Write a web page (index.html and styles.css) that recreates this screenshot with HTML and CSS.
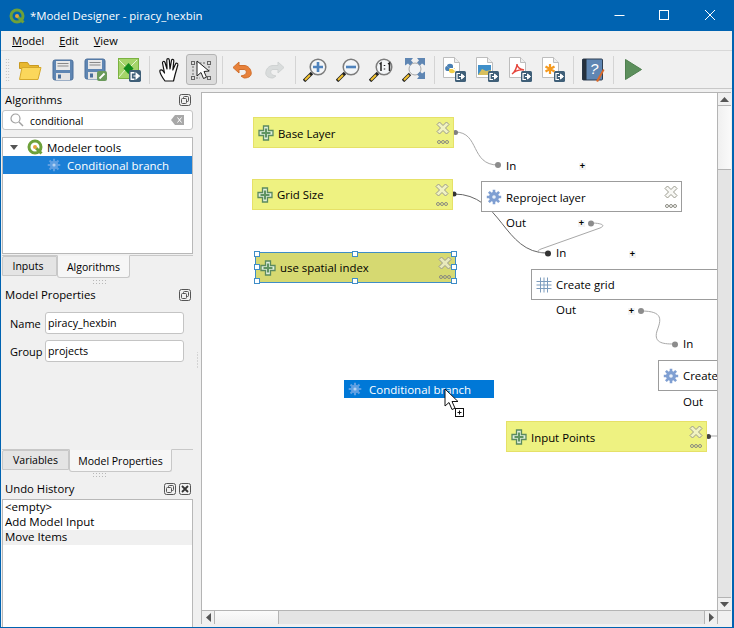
FILE: index.html
```html
<!DOCTYPE html>
<html lang="en">
<head>
<meta charset="utf-8">
<title>*Model Designer - piracy_hexbin</title>
<link rel="stylesheet" href="styles.css">
</head>
<body>
<svg class="defs" width="0" height="0" aria-hidden="true">
  <defs>
    <symbol id="plus" viewBox="0 0 16 16">
      <path d="M5.500 1h5v4.500H15v5h-4.500V15h-5v-4.500H1v-5h4.500z" fill="#dfeedd" stroke="#5b8a5e" stroke-width="1.300"/>
      <path d="M8 3.500v9M3.500 8h9" stroke="#5f9462" stroke-width="2.200"/>
    </symbol>
    <symbol id="gear" viewBox="0 0 16 16">
      <g stroke="#7f9fd2" stroke-width="2.600">
        <path d="M8 .8v14.400M.8 8h14.400M2.900 2.900l10.200 10.200M13.100 2.900L2.900 13.100"/>
      </g>
      <circle cx="8" cy="8" r="5" fill="#7f9fd2"/>
      <circle cx="8" cy="8" r="1.800" fill="#e8f0fa"/>
    </symbol>
    <symbol id="gear-sel" viewBox="0 0 16 16">
      <g stroke="#5f9fe2" stroke-width="2.400">
        <path d="M8 .8v14.400M.8 8h14.400M2.900 2.900l10.200 10.200M13.100 2.900L2.900 13.100"/>
      </g>
      <circle cx="8" cy="8" r="4.800" fill="#5f9fe2"/>
      <circle cx="8" cy="8" r="1.800" fill="#b4d2f2"/>
    </symbol>
    <symbol id="closex" viewBox="0 0 14 14">
      <path d="M3.500 1L7 4.500 10.500 1 13 3.500 9.500 7 13 10.500 10.500 13 7 9.500 3.500 13 1 10.500 4.500 7 1 3.500z" fill="#f4f4ee" fill-opacity=".6" stroke="#9a9a8e" stroke-width="1"/>
    </symbol>
    <symbol id="dots" viewBox="0 0 12 4">
      <g fill="none" stroke="#8a8a80" stroke-width="1"><circle cx="2" cy="2" r="1.500"/><circle cx="6" cy="2" r="1.500"/><circle cx="10" cy="2" r="1.500"/></g>
    </symbol>
    <symbol id="dock" viewBox="0 0 12 12">
      <rect x=".5" y=".5" width="11" height="11" rx="2" fill="#f0f0f0" stroke="#555"/>
      <rect x="4.500" y="2.500" width="5" height="5" rx="1" fill="none" stroke="#555"/>
      <rect x="2.500" y="4.500" width="5" height="5" rx="1" fill="#f0f0f0" stroke="#555"/>
    </symbol>
    <symbol id="export" viewBox="0 0 11 11">
      <rect width="11" height="11" rx="1.500" fill="#3f5f78"/>
      <path d="M5 2.500H2v6h3" fill="none" stroke="#fff" stroke-width="1.200"/>
      <path d="M4 5.500h3.500M6.500 3v5L9.500 5.500z" fill="#fff" stroke="#fff"/>
    </symbol>
    <symbol id="page" viewBox="0 0 17 21">
      <path d="M.5.500h11l5 5v15H.5z" fill="#fff" stroke="#bdbdbd"/>
      <path d="M11.500.500v5h5" fill="#eee" stroke="#bdbdbd"/>
    </symbol>
    <symbol id="lens" viewBox="0 0 24 24">
      <path d="M1 23l8-8" stroke="#222" stroke-width="3.400"/>
      <path d="M2 22l5-5" stroke="#f2c230" stroke-width="2"/>
      <circle cx="15" cy="9" r="7.800" fill="#f3f5f7" stroke="#7c7c7c" stroke-width="1.500"/>
    </symbol>
    <symbol id="qgis" viewBox="0 0 16 16">
      <circle cx="8" cy="8" r="6" fill="none" stroke="#6ea13a" stroke-width="3"/>
      <path d="M9 9l5.500 5.500" stroke="#6ea13a" stroke-width="3"/>
      <circle cx="8" cy="8" r="2" fill="#e8a33a"/>
    </symbol>
  </defs>
</svg>

<div class="window">
  <header class="titlebar">
    <svg class="app-logo" width="16" height="16"><use href="#qgis"/></svg>
    <span class="title-text">*Model Designer - piracy_hexbin</span>
    <div class="win-controls">
      <svg width="45" height="31"><path d="M16.500 15.500h10" stroke="#fff"/></svg>
      <svg width="45" height="31"><rect x="16.500" y="10.500" width="9" height="9" fill="none" stroke="#fff"/></svg>
      <svg width="45" height="31"><path d="M17 10l10 10M27 10L17 20" stroke="#fff"/></svg>
    </div>
  </header>

  <nav class="menubar">
    <span class="menu-item"><u>M</u>odel</span>
    <span class="menu-item"><u>E</u>dit</span>
    <span class="menu-item"><u>V</u>iew</span>
  </nav>

  <div class="toolbar">
    <div class="grip"></div>
    <div class="tool"><svg width="24" height="22" viewBox="0 0 24 22"><path d="M1.500 3.500h8l2 3h9v3H1.500z" fill="#e8b830" stroke="#c99a20"/><path d="M1.500 20.500l2.500-12h19l-3 12z" fill="#fbd75b" stroke="#d6a92c"/></svg></div>
    <div class="tool"><svg width="22" height="22" viewBox="0 0 22 22"><rect x="1" y="1" width="20" height="20" rx="2" fill="#5f86b3" stroke="#4a6f9b"/><rect x="4" y="2" width="14" height="9" fill="#e8e8e8"/><path d="M5.500 4.500h11M5.500 7h11" stroke="#888"/><rect x="4" y="14" width="14" height="7" fill="#e4e4e4"/><rect x="6" y="15.500" width="3" height="4" fill="#4a6f9b"/></svg></div>
    <div class="tool"><svg width="24" height="23" viewBox="0 0 24 23"><rect x="1" y="1" width="20" height="20" rx="2" fill="#5f86b3" stroke="#4a6f9b"/><rect x="4" y="2" width="14" height="9" fill="#e8e8e8"/><path d="M5.500 4.500h11M5.500 7h11" stroke="#888"/><rect x="4" y="14" width="10" height="7" fill="#e4e4e4"/><rect x="6" y="15.500" width="3" height="4" fill="#4a6f9b"/><rect x="13" y="13" width="10" height="10" rx="2" fill="#6a9a5b"/><path d="M15.500 20.500l5-5" stroke="#fff" stroke-width="1.800"/></svg></div>
    <div class="tool tool-export"><svg width="23" height="24" viewBox="0 0 23 24"><rect x=".5" y=".5" width="20" height="20" fill="#a5d46a" stroke="#7bb241"/><path d="M1 2l9 9 9-9M1 19l6-7M19 19l-6-7" fill="none" stroke="#e8f5d0"/><path d="M10.500 5l5 5.500-5 5.500-5-5.500z" fill="#128a1c"/><use href="#export" x="11" y="12" width="12" height="12"/></svg></div>
    <div class="sep"></div>
    <div class="tool"><svg width="20" height="25" viewBox="0 0 20 25"><path d="M6 24C3 20 1 17 .8 14c0-1.500 2.200-1.500 3.200 0l1.500 2-2-10c-.3-1.700 2-2.200 2.500-.5l2 6.500-.2-9c0-1.800 2.400-1.800 2.500 0l.7 9 1.500-8.500c.3-1.700 2.500-1.300 2.300.5l-1 9 2.700-6c.7-1.500 2.700-.7 2.300 1l-2.800 10c-.5 2-1 4-1.500 6z" fill="#fff" stroke="#111" stroke-width="1.200" stroke-linejoin="round"/></svg></div>
    <div class="tool tool-active"><svg width="22" height="24" viewBox="0 0 22 24"><g fill="none" stroke="#666"><rect x="1.500" y="3.500" width="3" height="3"/><rect x="1.500" y="18.500" width="3" height="3"/><rect x="17.500" y="3.500" width="3" height="3"/><rect x="17.500" y="18.500" width="3" height="3"/><path d="M6 5h10M6 20h4M3 8v9M19 8v6" stroke-dasharray="2 1.500"/></g><path d="M7 3v15l4-3.500 2.500 6 3-1.300-2.500-5.700 5-.5z" fill="#fff" stroke="#222"/></svg></div>
    <div class="sep"></div>
    <div class="tool"><svg width="20" height="18" viewBox="0 0 20 18"><path d="M7 1L1 6.500 7 12V8.500h5c3 0 3.500 5-1 6l-2 .5 3 2c5.500 0 8-2.500 7-6.500S15 4.500 12 4.500H7z" fill="#e8813a" stroke="#d06f2c" stroke-linejoin="round"/></svg></div>
    <div class="tool"><svg width="20" height="18" viewBox="0 0 20 18"><path d="M13 1l6 5.500L13 12V8.500H8c-3 0-3.500 5 1 6l2 .5-3 2c-5.500 0-8-2.500-7-6.500S5 4.500 8 4.500h5z" fill="#d9dcdc" stroke="#cfd2d2" stroke-linejoin="round"/></svg></div>
    <div class="sep"></div>
    <div class="tool"><svg width="24" height="24"><use href="#lens"/><path d="M15 4v10M10 9h10" stroke="#4f83bd" stroke-width="2.600"/></svg></div>
    <div class="tool"><svg width="24" height="24"><use href="#lens"/><path d="M10 9h10" stroke="#4f83bd" stroke-width="2.600"/></svg></div>
    <div class="tool"><svg width="24" height="24"><use href="#lens"/><path d="M10.500 6l1.500-1v8M19 6l1.500-1v8M15.500 7v1M15.500 10.500v1" fill="none" stroke="#222" stroke-width="1.500"/></svg></div>
    <div class="tool"><svg width="24" height="24" viewBox="0 0 24 24"><path d="M1 23l7-7" stroke="#222" stroke-width="3.400"/><path d="M2 22l5-5" stroke="#f2c230" stroke-width="2"/><circle cx="13" cy="11" r="6" fill="#f0f2f4" stroke="#a8a8a8"/><path d="M3 0h8L9 2.500l2 2L8 7.500l-2-2-3 2zM23 0h-8l2 2.500-2 2 3 3 2-2 3 2zM23 21h-8l2-2.500-2-2 3-3 2 2 3-2z" fill="#5f86b3"/></svg></div>
    <div class="sep"></div>
    <div class="tool tool-doc"><svg width="23" height="25" viewBox="0 0 23 25"><use href="#page" width="17" height="21"/><path d="M4 9c0-3 6-3 6 0v2H6.500" fill="#4a80b3"/><path d="M4 9c-2.500 0-2.500 5 0 5h2.500v-3" fill="#4a80b3"/><path d="M12 14c0 3-6 3-6 0v-2h3.500" fill="#f3cf46"/><path d="M10 11c2.500 0 2.500 3 2 3v-3z" fill="#f3cf46"/><use href="#export" x="12" y="14" width="11" height="11"/></svg></div>
    <div class="tool tool-doc"><svg width="23" height="25" viewBox="0 0 23 25"><use href="#page" width="17" height="21"/><rect x="2" y="8" width="13" height="10" fill="#3f8fc9"/><path d="M2 18l4-6 4 2 5-1v5z" fill="#d8bf5c"/><use href="#export" x="12" y="14" width="11" height="11"/></svg></div>
    <div class="tool tool-doc"><svg width="23" height="25" viewBox="0 0 23 25"><use href="#page" width="17" height="21"/><path d="M3 17c3-2 5-7 5-10 0 3 2 5 7 6-4-.5-9 1-12 4z" fill="none" stroke="#e5453c" stroke-width="1.400"/><use href="#export" x="12" y="14" width="11" height="11"/></svg></div>
    <div class="tool tool-doc"><svg width="23" height="25" viewBox="0 0 23 25"><use href="#page" width="17" height="21"/><path d="M8 7v10M3.500 9.500l9 5M12.500 9.500l-9 5" stroke="#f59a1f" stroke-width="2.200"/><use href="#export" x="12" y="14" width="11" height="11"/></svg></div>
    <div class="sep"></div>
    <div class="tool"><svg width="23" height="24" viewBox="0 0 23 24"><rect x=".5" y="1" width="20" height="21" rx="1" fill="#5f86b3" stroke="#2e3e52"/><rect x=".5" y="1" width="4" height="21" fill="#25303d"/><text class="help-mark" x="8" y="16">?</text><path d="M14 23l7-12 1.500 1-6.500 12z" fill="#d9692b"/></svg></div>
    <div class="sep"></div>
    <div class="tool"><svg width="17" height="21" viewBox="0 0 17 21"><path d="M.5.500v20L16.500 10.500z" fill="#5c8f5c" stroke="#4f7f4f"/></svg></div>
  </div>

  <div class="main">
    <aside class="sidebar">
      <section class="panel-algorithms">
        <div class="dock-title"><span>Algorithms</span><svg width="12" height="12"><use href="#dock"/></svg></div>
        <div class="search">
          <svg width="14" height="14" viewBox="0 0 14 14"><circle cx="5.500" cy="5.500" r="4.500" fill="none" stroke="#a0a0a0" stroke-width="1.200"/><path d="M9 9l4 4" stroke="#a0a0a0" stroke-width="1.500"/></svg>
          <span class="search-text">conditional</span>
          <svg width="13" height="10" viewBox="0 0 13 10"><path d="M4 0h9v10H4L0 5z" fill="#a8a8a8"/><path d="M6.500 2.500l4 5M10.500 2.500l-4 5" stroke="#fff"/></svg>
        </div>
        <div class="tree">
          <div class="tree-row">
            <svg class="caret" width="8" height="5"><path d="M0 0h8L4 5z" fill="#555"/></svg>
            <svg width="16" height="16"><use href="#qgis"/></svg>
            <span>Modeler tools</span>
          </div>
          <div class="tree-row tree-selected">
            <svg class="tree-gear" width="14" height="14"><use href="#gear-sel"/></svg>
            <span>Conditional branch</span>
          </div>
        </div>
      </section>
      <div class="tabs tabs-a">
        <span class="tab tab-off tab-inputs">Inputs</span>
        <span class="tab tab-on tab-alg">Algorithms</span>
      </div>
      <div class="drag-dots"></div>
      <section class="panel-props">
        <div class="dock-title"><span>Model Properties</span><svg width="12" height="12"><use href="#dock"/></svg></div>
        <div class="form-row"><label>Name</label><span class="field">piracy_hexbin</span></div>
        <div class="form-row"><label>Group</label><span class="field">projects</span></div>
      </section>
      <div class="tabs tabs-b">
        <span class="tab tab-off tab-vars">Variables</span>
        <span class="tab tab-on tab-mp">Model Properties</span>
      </div>
      <div class="drag-dots drag-dots-b"></div>
      <section class="panel-undo">
        <div class="dock-title"><span>Undo History</span><span class="dock-btns"><svg width="12" height="12"><use href="#dock"/></svg><svg width="12" height="12" viewBox="0 0 12 12"><rect x=".5" y=".5" width="11" height="11" rx="2" fill="#f0f0f0" stroke="#555"/><path d="M3 3l6 6M9 3L3 9" stroke="#333" stroke-width="1.800"/></svg></span></div>
        <ul class="undo-list">
          <li>&lt;empty&gt;</li>
          <li>Add Model Input</li>
          <li class="undo-current">Move Items</li>
        </ul>
      </section>
    </aside>

    <div class="vsplit"></div>

    <div class="view">
      <div class="canvas">
        <svg class="wires" width="515" height="517">
          <g fill="none" transform="translate(-202 -93)">
            <path d="M455 132C480 132 470 165 498 165" stroke="#a8a8a8"/>
            <path d="M454 194C502 194 503 253 547 253" stroke="#666"/>
            <path d="M591 223C600 223 607 225 600 228L541 249C534 252 540 253 547 253" stroke="#a8a8a8"/>
            <path d="M641 311C664 311 661 320 657 331C653 344 665 344 675 344" stroke="#a8a8a8"/>
            <path d="M708 436H717" stroke="#a8a8a8"/>
          </g>
          <g transform="translate(-202 -93)">
            <circle cx="455.500" cy="132.500" r="2.500" fill="#808080"/>
            <circle cx="498" cy="165" r="3" fill="#8c8c8c"/>
            <circle cx="454" cy="194" r="2.500" fill="#333"/>
            <circle cx="591" cy="223.500" r="3" fill="#8c8c8c"/>
            <circle cx="548" cy="253.500" r="3" fill="#333"/>
            <circle cx="641" cy="311" r="3" fill="#8c8c8c"/>
            <circle cx="675" cy="344.500" r="3" fill="#8c8c8c"/>
            <circle cx="708.500" cy="436.500" r="2.500" fill="#444"/>
          </g>
        </svg>

        <div class="node input n-base">
          <svg class="node-icon" width="16" height="16"><use href="#plus"/></svg>
          <span>Base Layer</span>
          <svg class="node-x" width="14" height="14"><use href="#closex"/></svg>
          <svg class="node-dots" width="12" height="4"><use href="#dots"/></svg>
        </div>
        <div class="node input n-grid">
          <svg class="node-icon" width="16" height="16"><use href="#plus"/></svg>
          <span>Grid Size</span>
          <svg class="node-x" width="14" height="14"><use href="#closex"/></svg>
          <svg class="node-dots" width="12" height="4"><use href="#dots"/></svg>
        </div>
        <div class="node input selected n-index">
          <svg class="node-icon" width="16" height="16"><use href="#plus"/></svg>
          <span>use spatial index</span>
          <svg class="node-x" width="14" height="14"><use href="#closex"/></svg>
          <svg class="node-dots" width="12" height="4"><use href="#dots"/></svg>
          <i class="handle h-tl"></i><i class="handle h-tc"></i><i class="handle h-tr"></i>
          <i class="handle h-ml"></i><i class="handle h-mr"></i>
          <i class="handle h-bl"></i><i class="handle h-bc"></i><i class="handle h-br"></i>
        </div>
        <div class="node algo n-reproject">
          <svg class="node-icon" width="16" height="16"><use href="#gear"/></svg>
          <span>Reproject layer</span>
          <svg class="node-x" width="14" height="14"><use href="#closex"/></svg>
          <svg class="node-dots" width="12" height="4"><use href="#dots"/></svg>
        </div>
        <div class="node algo n-create">
          <svg class="node-icon" width="16" height="16" viewBox="0 0 16 16"><path d="M.5 4.500h15M.5 8h15M.5 11.500h15M4.500.5v15M8 .5v15M11.500.5v15" stroke="#7d9cbd" fill="none"/></svg>
          <span>Create grid</span>
        </div>
        <div class="node algo n-create2">
          <svg class="node-icon" width="16" height="16"><use href="#gear"/></svg>
          <span>Create</span>
        </div>
        <div class="node input n-points">
          <svg class="node-icon" width="16" height="16"><use href="#plus"/></svg>
          <span>Input Points</span>
          <svg class="node-x" width="14" height="14"><use href="#closex"/></svg>
          <svg class="node-dots" width="12" height="4"><use href="#dots"/></svg>
        </div>

        <span class="port p-in1">In</span>
        <span class="port p-out1">Out</span>
        <span class="port p-in2">In</span>
        <span class="port p-out2">Out</span>
        <span class="port p-in3">In</span>
        <span class="port p-out3">Out</span>
        <span class="mini-plus m1">+</span>
        <span class="mini-plus m2">+</span>
        <span class="mini-plus m3">+</span>
        <span class="mini-plus m4">+</span>

        <div class="drag-item">
          <svg width="14" height="14"><use href="#gear-sel"/></svg>
          <span>Conditional branch</span>
        </div>
        <svg class="cursor" width="24" height="34" viewBox="0 0 24 34">
          <path d="M1 1v17l4-3.500 3 7 3-1.300-3-6.700h6z" fill="#fff" stroke="#111"/>
          <rect x="11.500" y="20.500" width="8" height="8" fill="#fff" stroke="#111"/>
          <path d="M13.500 24.500h4M15.500 22.500v4" stroke="#111"/>
        </svg>
      </div>
      <div class="vbar">
        <div class="sb-btn sb-v"><svg width="9" height="5"><path d="M0 5h9L4.500 0z" fill="#555"/></svg></div>
        <div class="vthumb"></div>
        <div class="vtrack"></div>
        <div class="sb-btn sb-v sb-down"><svg width="9" height="5"><path d="M0 0h9L4.500 5z" fill="#555"/></svg></div>
      </div>
      <div class="hbar">
        <div class="sb-btn sb-h"><svg width="5" height="9"><path d="M5 0v9L0 4.500z" fill="#555"/></svg></div>
        <div class="hthumb"></div>
        <div class="htrack"></div>
        <div class="sb-btn sb-h sb-right"><svg width="5" height="9"><path d="M0 0v9l5-4.500z" fill="#555"/></svg></div>
      </div>
      <div class="corner"></div>
    </div>
  </div>
</div>
</body>
</html>
```

FILE: styles.css
```css
* { box-sizing: border-box; }
html, body { margin: 0; padding: 0; overflow: hidden; }
body { width: 734px; height: 628px; font-family: "Open Sans", "Noto Sans", sans-serif; font-size: 11px; color: #000; background: #f0f0f0; }
svg { display: block; flex: none; }
.defs { position: absolute; }

.window { width: 734px; height: 628px; display: flex; flex-direction: column; background: #f0f0f0; border-left: 1px solid #0063b1; border-right: 2px solid #0063b1; border-bottom: 1px solid #0063b1; }

.titlebar { height: 31px; flex: none; margin-left: -1px; margin-right: -2px; background: #0063b1; color: #fff; display: flex; align-items: center; padding-left: 9px; font-size: 11.400px; }
.title-text { margin-left: 5px; }
.win-controls { margin-left: auto; display: flex; padding-right: 1px; }

.menubar { height: 20px; flex: none; display: flex; align-items: center; padding-left: 11px; gap: 15px; border-bottom: 1px solid #d8d8d8; }

.toolbar { height: 38px; flex: none; display: flex; align-items: center; border-bottom: 1px solid #c8c8c8; padding-left: 3px; }
.grip { width: 5px; height: 24px; margin-right: 3.500px; margin-left: 1px; background-image: radial-gradient(circle, #b8b8b8 0.600px, transparent 0.700px); background-size: 2.500px 3px; }
.tool { width: 33px; height: 31px; display: flex; align-items: center; justify-content: center; }
.tool-active { width: 31px; margin: 0 2px 0 0; background: #dcdcdc; border: 1px solid #b4b4b4; border-radius: 3px; }
.sep { width: 7px; height: 28px; flex: none; background: linear-gradient(#d4d4d4, #d4d4d4) no-repeat center / 1px 100%; }
.help-mark { font-size: 15px; fill: #fff; font-family: "Liberation Sans", sans-serif; font-style: italic; }

.main { flex: 1; min-height: 0; display: flex; }

.sidebar { width: 192px; flex: none; padding-left: 1px; display: flex; flex-direction: column; }
.dock-title { height: 21px; display: flex; align-items: center; justify-content: space-between; padding: 0 2px 0 3px; font-size: 11.300px; }
.dock-btns { display: flex; gap: 3px; }

.search { height: 20px; background: #fff; border: 1px solid #c4c4c4; border-radius: 3px; display: flex; align-items: center; padding: 0 8px 0 7px; gap: 6px; }
.search-text { flex: 1; font-size: 10.300px; padding-top: 1px; }

.tree { height: 117px; margin-top: 7px; background: #fff; border: 1px solid #b8b8b8; }
.tree-row { height: 18px; display: flex; align-items: center; font-size: 11.500px; }
.tree-row .caret { margin: 0 9px 0 7px; }
.tree-row span { margin-left: 4px; white-space: nowrap; }
.tree-selected { background: #1b7fd6; color: #fff; }
.tree-gear { margin-left: 44px; }
.tree-selected span { margin-left: 6px; }

.tabs { display: flex; align-items: flex-start; flex: none; position: relative; }
.tabs-a { height: 24px; margin-top: 1px; background: linear-gradient(#c8c8c8, #c8c8c8) no-repeat top / 100% 1px; }
.tabs-b { height: 24px; margin-top: 0; background: linear-gradient(#c8c8c8, #c8c8c8) no-repeat top / 100% 1px; }
.tab { display: flex; align-items: center; justify-content: center; white-space: nowrap; font-size: 10.500px; }
.tab-off { height: 20px; margin-top: 1px; background: #e4e4e4; border: 1px solid #c8c8c8; border-top-left-radius: 2px; }
.tab-on { height: 23px; background: #f6f6f6; border: 1px solid #c8c8c8; border-top-color: #f0f0f0; border-radius: 0 0 3px 3px; }
.tab-inputs { width: 55px; padding-right: 3px; }
.tab-alg { width: 73px; }
.tab-vars { width: 67px; }
.tab-mp { width: 103px; }

.drag-dots { height: 5px; width: 16px; margin: 0 0 0 90px; flex: none; background-image: radial-gradient(circle, #b8b8b8 0.600px, transparent 0.700px); background-size: 3px 3px; }
.panel-props { height: 165px; flex: none; }
.panel-props .dock-title { margin-bottom: 7px; }
.form-row { display: flex; align-items: center; height: 22px; margin-bottom: 6px; padding-left: 8px; }
.form-row label { width: 35px; }
.field { width: 139px; height: 22px; display: flex; align-items: center; background: #fff; border: 1px solid #c4c4c4; border-radius: 3px; padding-left: 2px; font-size: 10.700px; }
.drag-dots-b { margin-top: -1px; }
.panel-undo { flex: 1; min-height: 0; display: flex; flex-direction: column; padding-top: 1px; }
.undo-list { list-style: none; margin: 0; padding: 0; flex: 1; background: #fff; border: 1px solid #b8b8b8; border-bottom: 0; font-size: 11.500px; }
.undo-list li { height: 15px; line-height: 14px; padding-left: 2px; }
.undo-current { background: #f0f0f0; }

.vsplit { width: 8px; flex: none; background-image: radial-gradient(circle, #b8b8b8 0.600px, transparent 0.700px); background-position: center; background-repeat: repeat-y; background-size: 3px 3px; mask: linear-gradient(transparent 263px, #000 263px, #000 280px, transparent 280px); }

.view { width: 530px; height: 532px; margin-top: 3px; flex: none; display: grid; grid-template-columns: 515px 14px; grid-template-rows: 517px 14px; border: 1px solid #b4b4b4; background: #fff; }

.canvas { position: relative; overflow: hidden; background: #fff; font-size: 11.500px; }
.wires { position: absolute; left: 0; top: 0; }

.node { position: absolute; width: 201px; height: 31px; display: flex; align-items: center; padding-left: 4px; border: 1px solid; white-space: nowrap; font-size: 11.400px; }
.node > span { margin-left: 4px; }
.input { background: #eef281; border-color: #e6e168; }
.algo { background: #fff; border-color: #9c9c9c; }
.selected { background: #d6d971; border-color: #3f8dc7; }
.node-icon { flex: none; }
.node-x { position: absolute; right: 3px; top: 3px; }
.node-dots { position: absolute; right: 4px; bottom: 3px; }

.n-base { left: 51px; top: 24px; padding-top: 1px; }
.n-grid { left: 50px; top: 86px; }
.n-index { left: 53px; top: 159px; height: 31px; width: 201px; }
.n-reproject { left: 279px; top: 88px; width: 201px; padding-top: 1px; }
.n-create { left: 329px; top: 176px; width: 220px; }
.n-create2 { left: 456px; top: 267px; width: 100px; }
.n-points { left: 304px; top: 328px; padding-top: 1px; }

.handle { position: absolute; width: 6px; height: 6px; background: #fff; border: 1px solid #3f8dc7; }
.h-tl { left: -2px; top: -2px; }
.h-tc { left: 96px; top: -2px; }
.h-tr { right: -2px; top: -2px; }
.h-ml { left: -2px; top: 11px; }
.h-mr { right: -2px; top: 11px; }
.h-bl { left: -2px; bottom: -2px; }
.h-bc { left: 96px; bottom: -2px; }
.h-br { right: -2px; bottom: -2px; }

.port { position: absolute; line-height: 16px; font-size: 11.500px; }
.p-in1 { left: 304px; top: 65px; }
.p-out1 { left: 304px; top: 122px; }
.p-in2 { left: 354px; top: 152px; }
.p-out2 { left: 354px; top: 209px; }
.p-in3 { left: 481px; top: 243px; }
.p-out3 { left: 481px; top: 301px; }

.mini-plus { position: absolute; width: 7px; height: 7px; font-size: 9px; line-height: 7px; text-align: center; font-weight: 700; font-family: "Liberation Sans", sans-serif; background: #f4f4f4; }
.m1 { left: 377px; top: 70px; }
.m2 { left: 376px; top: 127px; }
.m3 { left: 427px; top: 158px; }
.m4 { left: 426px; top: 215px; }

.drag-item { position: absolute; left: 142px; top: 287px; width: 150px; height: 18px; background: #0078d7; color: #fff; display: flex; align-items: center; padding-left: 4px; gap: 7px; font-size: 11.500px; }
.cursor { position: absolute; left: 242px; top: 295px; }

.vbar { display: flex; flex-direction: column; border-left: 1px solid #b4b4b4; background: #e4e4e4; }
.sb-btn { display: flex; align-items: center; justify-content: center; background: #f0f0f0; flex: none; }
.sb-v { height: 13px; border-bottom: 1px solid #b4b4b4; }
.sb-down { border-bottom: 0; border-top: 1px solid #b4b4b4; }
.vthumb { height: 64px; flex: none; background: linear-gradient(90deg, #f0f0f0, #fafafa); border-bottom: 1px solid #b4b4b4; }
.vtrack { flex: 1; }
.hbar { display: flex; border-top: 1px solid #b4b4b4; background: #e4e4e4; }
.sb-h { width: 13px; border-right: 1px solid #b4b4b4; }
.sb-right { border-right: 0; border-left: 1px solid #b4b4b4; }
.hthumb { width: 64px; flex: none; background: linear-gradient(#fafafa, #f0f0f0); border-right: 1px solid #b4b4b4; }
.htrack { flex: 1; }
.corner { background: #f0f0f0; border-left: 1px solid #b4b4b4; border-top: 1px solid #b4b4b4; }
```
